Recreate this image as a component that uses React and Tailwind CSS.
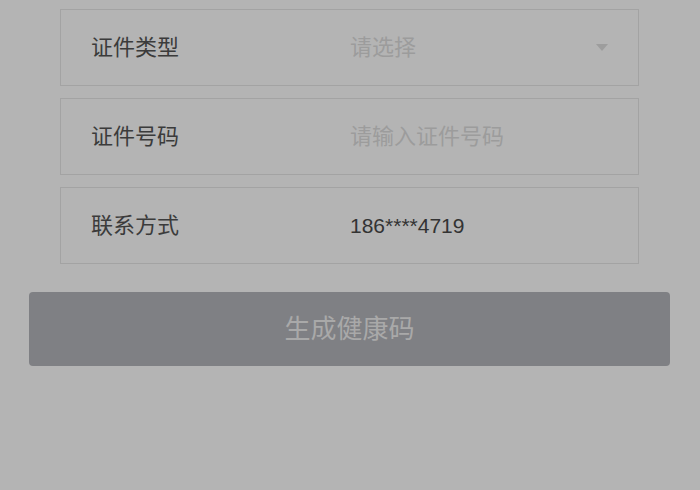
import React from 'react';

const font = { fontFamily: '"Liberation Sans", "Noto Sans CJK SC", sans-serif' };

function Row({ label, children, right }) {
  return (
    <div className="h-[77px] border border-[#a3a3a3] flex items-center">
      <div className="w-[289px] pl-[30px] text-[22px] text-[#3b3b3b] shrink-0">{label}</div>
      <div className="flex-1 text-[21px]">{children}</div>
      {right}
    </div>
  );
}

export default function App() {
  return (
    <div className="w-[700px] h-[490px] bg-[#b4b4b4] overflow-hidden" style={font}>
      <div className="flex flex-col gap-[12px] pt-[9px] pl-[60px] pr-[61px]">
        <Row
          label="证件类型"
          right={
            <svg width="12" height="7" viewBox="0 0 12 7" className="mr-[30px]">
              <path d="M0 0 L12 0 L6 7 Z" fill="#9d9d9d" />
            </svg>
          }
        >
          <span className="text-[#9c9c9c] text-[22px]">请选择</span>
        </Row>
        <Row label="证件号码">
          <span className="text-[#9c9c9c] text-[22px]">请输入证件号码</span>
        </Row>
        <Row label="联系方式">
          <span className="text-[#333333]">186****4719</span>
        </Row>
      </div>
      <div className="pl-[29px] pt-[28px] pr-[30px]">
        <div className="h-[74px] rounded-[4px] bg-[#7f8084] flex items-center justify-center text-[26px] text-[#a9a9a9]">
          生成健康码
        </div>
      </div>
    </div>
  );
}
